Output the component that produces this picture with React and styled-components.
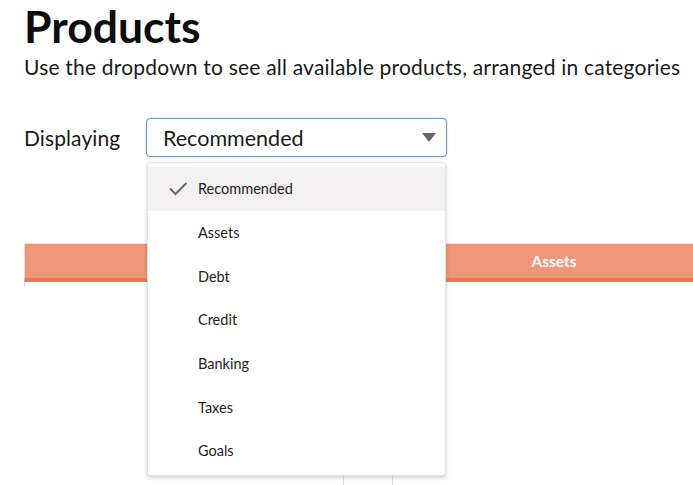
import React, { useState } from 'react';
import styled, { createGlobalStyle } from 'styled-components';

const GlobalStyle = createGlobalStyle`
  body {
    margin: 0;
    background: #ffffff;
    font-family: Lato, "Open Sans", "Liberation Sans", sans-serif;
    color: #111111;
    overflow: hidden;
  }
`;

const Page = styled.div`
  width: 693px;
  height: 485px;
  padding: 2px 0 0 24px;
  box-sizing: border-box;
  overflow: hidden;
`;

const Title = styled.h1`
  margin: 0;
  font-size: 44.5px;
  line-height: 48px;
  font-weight: 700;
  color: #0c0c0c;
`;

const Subtitle = styled.p`
  margin: 4px 0 0;
  font-size: 21px;
  line-height: 25px;
  letter-spacing: 0.2px;
  color: #1a1a1a;
  white-space: nowrap;
`;

const FilterRow = styled.div`
  display: flex;
  align-items: center;
  gap: 24px;
  margin-top: 39px;
`;

const Label = styled.span`
  min-width: 98px;
  font-size: 21px;
  letter-spacing: 0.1px;
  color: #1a1a1a;
`;

const SelectWrap = styled.div`
  position: relative;
  width: 301px;
`;

const SelectBox = styled.div`
  display: flex;
  align-items: center;
  justify-content: space-between;
  height: 39px;
  box-sizing: border-box;
  padding: 0 10px 0 16px;
  border: 1px solid #5c9bd3;
  border-radius: 4px;
  box-shadow: 0 0 2px rgba(92, 155, 211, 0.45);
  font-size: 21.5px;
  color: #1a1a1a;
  background: #fff;
`;

const Caret = styled.span`
  width: 0;
  height: 0;
  border-left: 7px solid transparent;
  border-right: 7px solid transparent;
  border-top: 9px solid #666666;
`;

const Menu = styled.ul`
  position: absolute;
  top: calc(100% + 5px);
  left: 1px;
  right: 1px;
  margin: 0;
  padding: 4px 0 2px;
  list-style: none;
  background: #ffffff;
  border: 1px solid #e2e2e2;
  border-radius: 4px;
  box-shadow: 0 2px 4px rgba(0, 0, 0, 0.18);
  z-index: 10;
`;

const MenuItem = styled.li`
  display: flex;
  align-items: center;
  height: 43.7px;
  padding-left: 20px;
  font-size: 14.5px;
  color: #222222;
  background: ${props => (props.$selected ? '#f2f0f0' : 'transparent')};
`;

const CheckSlot = styled.span`
  width: 30px;
  display: flex;
  align-items: center;
`;

const Table = styled.div`
  width: 689px;
  margin-top: 86px;
`;

const HeaderRow = styled.div`
  display: grid;
  grid-template-columns: 319px 50px 320px;
  height: 39px;
  box-sizing: border-box;
  border-top: 1px solid #e4e4e4;
  border-left: 1px solid #dddddd;
  border-bottom: 4px solid #e97a58;
  background: #ef9678;
  border-radius: 2px 0 0 0;
`;

const HeaderCell = styled.div`
  display: flex;
  align-items: center;
  justify-content: center;
  font-size: 15.5px;
  font-weight: 700;
  color: #ffffff;
`;

const BodyRow = styled.div`
  display: grid;
  grid-template-columns: 319px 50px 320px;
  margin-top: ${props => props.$offset || 0}px;
`;

const BodyCell = styled.div`
  height: ${props => props.$h}px;
  border-left: ${props => (props.$left ? '1px solid #dddddd' : 'none')};
  border-right: ${props => (props.$right ? '1px solid #dddddd' : 'none')};
`;

const categories = ['Recommended', 'Assets', 'Debt', 'Credit', 'Banking', 'Taxes', 'Goals'];

const CheckIcon = () => (
  <svg width="20" height="14" viewBox="0 0 20 14">
    <polyline points="2,6.5 7.5,12 18.5,1" fill="none" stroke="#666666" strokeWidth="2" />
  </svg>
);

export default function App() {
  const [selected] = useState('Recommended');

  return (
    <Page>
      <GlobalStyle />
      <Title>Products</Title>
      <Subtitle>Use the dropdown to see all available products, arranged in categories</Subtitle>
      <FilterRow>
        <Label>Displaying</Label>
        <SelectWrap>
          <SelectBox>
            {selected}
            <Caret />
          </SelectBox>
          <Menu>
            {categories.map(c => (
              <MenuItem key={c} $selected={c === selected}>
                <CheckSlot>{c === selected && <CheckIcon />}</CheckSlot>
                {c}
              </MenuItem>
            ))}
          </Menu>
        </SelectWrap>
      </FilterRow>
      <Table>
        <HeaderRow>
          <HeaderCell />
          <HeaderCell />
          <HeaderCell>Assets</HeaderCell>
        </HeaderRow>
        <BodyRow>
          <BodyCell $h={5} $left />
        </BodyRow>
        <BodyRow $offset={185}>
          <BodyCell $h={0} />
          <BodyCell $h={20} $left $right />
        </BodyRow>
      </Table>
    </Page>
  );
}
